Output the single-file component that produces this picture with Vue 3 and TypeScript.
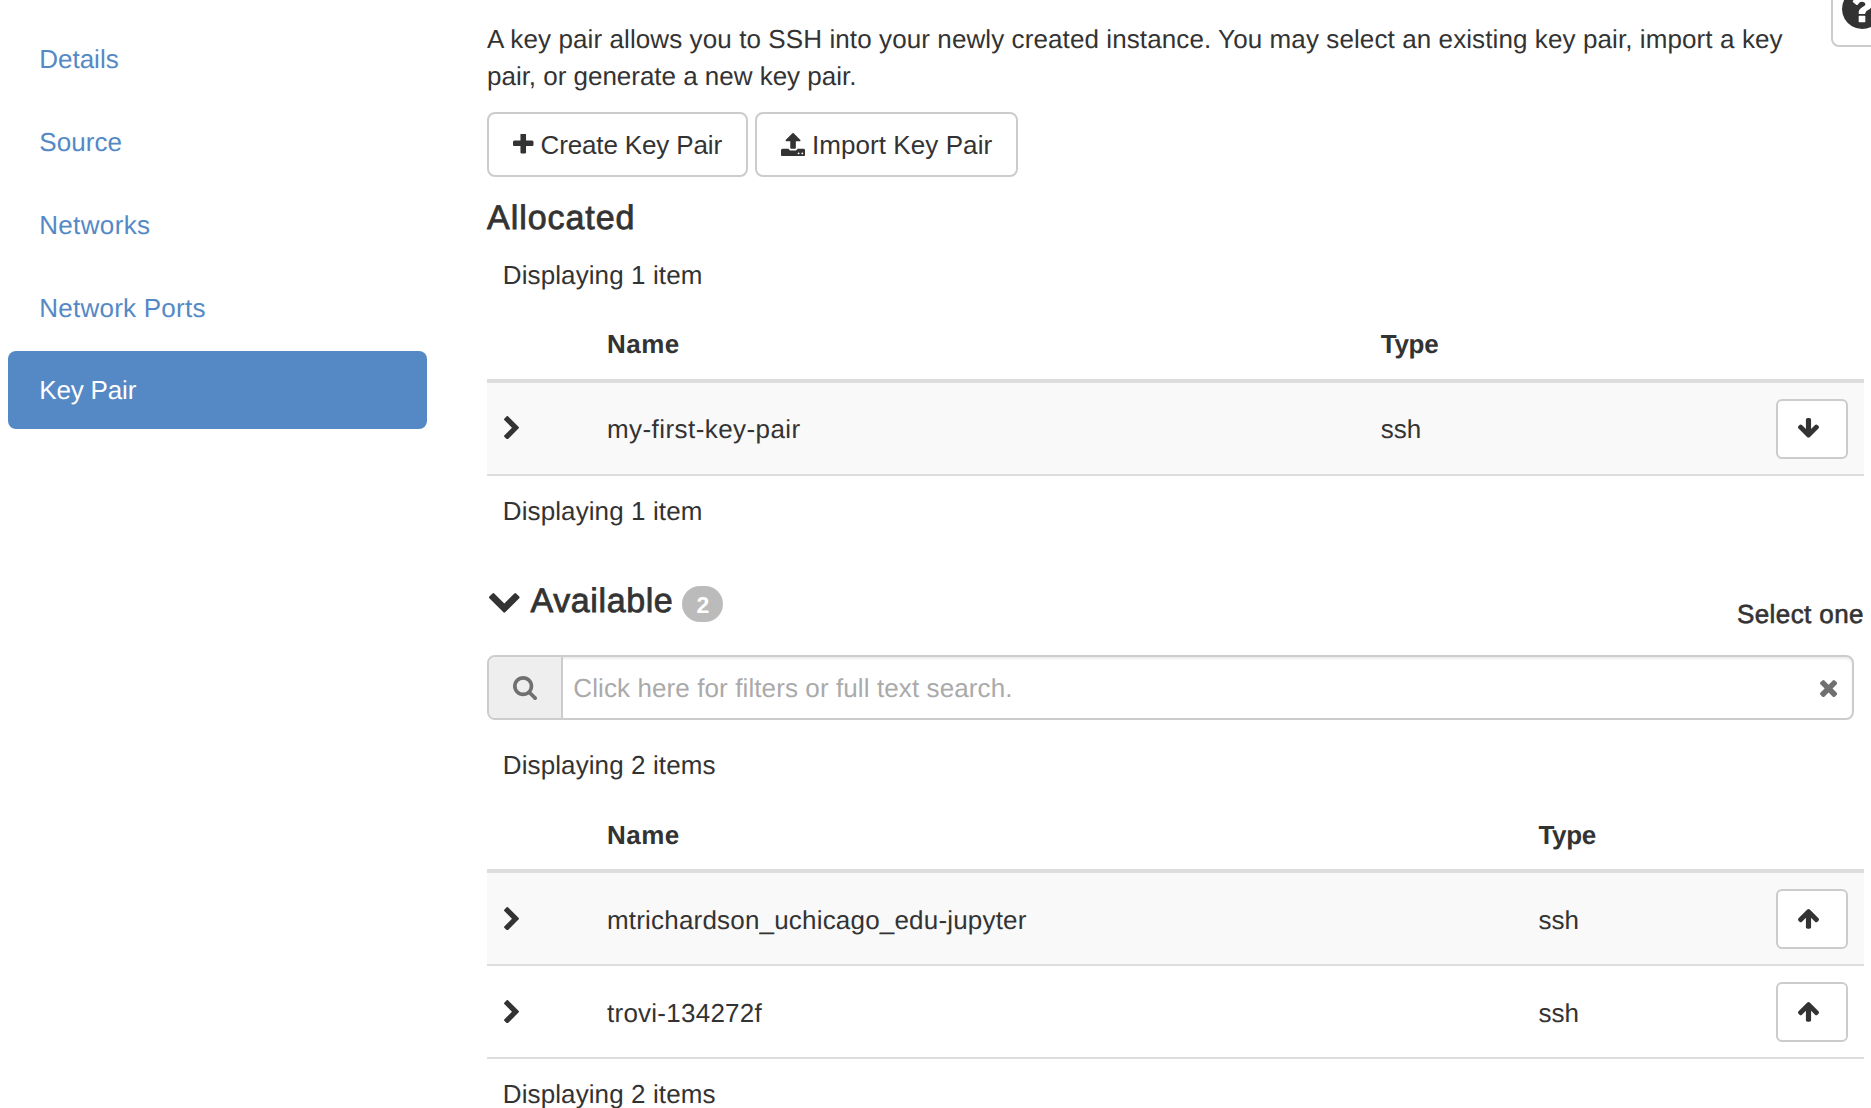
<script setup lang="ts">
interface Step { label: string; spacing: string; active?: boolean }
interface KeyPair { name: string; type: string; spacing: string }

const steps: Step[] = [
  { label: 'Details', spacing: '0px' },
  { label: 'Source', spacing: '0.1px' },
  { label: 'Networks', spacing: '0.35px' },
  { label: 'Network Ports', spacing: '0.25px' },
  { label: 'Key Pair', spacing: '-0.15px', active: true },
]
const allocated: KeyPair[] = [{ name: 'my-first-key-pair', type: 'ssh', spacing: '0.43px' }]
const available: KeyPair[] = [
  { name: 'mtrichardson_uchicago_edu-jupyter', type: 'ssh', spacing: '0.19px' },
  { name: 'trovi-134272f', type: 'ssh', spacing: '0.25px' },
]

const chevronRight = 'M1363 877l-742 742q-19 19-45 19t-45-19l-166-166q-19-19-19-45t19-45l531-531-531-531q-19-19-19-45t19-45l166-166q19-19 45-19t45 19l742 742q19 19 19 45t-19 45z'
const arrowUp = 'M1675 971q0 51-37 90l-75 75q-38 38-91 38-54 0-90-38l-294-293v704q0 52-37.5 84.5t-90.5 32.5h-128q-53 0-90.5-32.5t-37.5-84.5v-704l-294 293q-36 38-90 38t-90-38l-75-75q-38-38-38-90 0-53 38-91l651-651q35-37 90-37 54 0 91 37l651 651q37 39 37 91z'
</script>

<template>
  <div class="wizard">
    <nav class="steps">
      <a v-for="s in steps" :key="s.label" class="step" :class="{ active: s.active }" :style="{ letterSpacing: s.spacing }">{{ s.label }}</a>
    </nav>

    <main class="content">
      <header class="top">
        <p class="intro">A key pair allows you to SSH into your newly created instance. You may select an existing key pair, import a key<br><span class="second">pair, or generate a new key pair.</span></p>
        <button class="help" aria-label="Help">
          <svg viewBox="128 128 1536 1536" width="40" height="40"><path d="M1024 1376v-192q0-14-9-23t-23-9h-192q-14 0-23 9t-9 23v192q0 14 9 23t23 9h192q14 0 23-9t9-23zm256-672q0-88-55.5-163t-138.5-116-170-41q-243 0-371 213-15 24 8 42l132 100q7 6 19 6 16 0 25-12 53-68 86-92 34-24 86-24 48 0 85.5 26t37.5 59q0 38-20 61t-68 45q-63 28-115.5 86.5t-52.5 125.5v36q0 14 9 23t23 9h192q14 0 23-9t9-23q0-19 21.5-49.5t54.5-49.5q32-18 49-28.5t46-35 44.5-48 28-60.5 12.5-81zm384 192q0 209-103 385.5t-279.5 279.5-385.5 103-385.5-103-279.5-279.5-103-385.5 103-385.5 279.5-279.5 385.5-103 385.5 103 279.5 279.5 103 385.5z" /></svg>
        </button>
      </header>

      <div class="actions">
        <button class="btn create">
          <svg viewBox="192 192 1408 1408" width="20.5" height="20.5"><path d="M1600 736v192q0 40-28 68t-68 28h-416v416q0 40-28 68t-68 28h-192q-40 0-68-28t-28-68v-416h-416q-40 0-68-28t-28-68v-192q0-40 28-68t68-28h416v-416q0-40 28-68t68-28h192q40 0 68 28t28 68v416h416q40 0 68 28t28 68z" /></svg>
          <span>Create Key Pair</span>
        </button>
        <button class="btn import">
          <svg viewBox="64 64 1664 1600" width="24.1" height="23.2"><path d="M1344 1472q0-26-19-45t-45-19-45 19-19 45 19 45 45 19 45-19 19-45zm256 0q0-26-19-45t-45-19-45 19-19 45 19 45 45 19 45-19 19-45zm128-224v320q0 40-28 68t-68 28h-1472q-40 0-68-28t-28-68v-320q0-40 28-68t68-28h427q21 56 70.5 92t110.5 36h256q61 0 110.5-36t70.5-92h427q40 0 68 28t28 68zm-325-648q-17 40-59 40h-256v448q0 26-19 45t-45 19h-256q-26 0-45-19t-19-45v-448h-256q-42 0-59-40-17-39 14-69l448-448q18-19 45-19t45 19l448 448q31 30 14 69z" /></svg>
          <span>Import Key Pair</span>
        </button>
      </div>

      <section class="allocated">
        <h4 class="title">Allocated</h4>
        <div class="count first">Displaying 1 item</div>
        <div class="table">
          <div class="row head"><span /><span class="name">Name</span><span class="kind">Type</span><span /></div>
          <div v-for="k in allocated" :key="k.name" class="row item">
            <svg class="chev" viewBox="346 26 1036 1612" width="15" height="23.4"><path :d="chevronRight" /></svg>
            <span :style="{ letterSpacing: k.spacing }">{{ k.name }}</span>
            <span class="type">{{ k.type }}</span>
            <button class="move" aria-label="Remove"><svg class="down" viewBox="117 192 1558 1472" width="21" height="19.8"><path :d="arrowUp" /></svg></button>
          </div>
        </div>
        <div class="count last">Displaying 1 item</div>
      </section>

      <section class="available">
        <div class="available-head">
          <svg class="caret" viewBox="90 533 1612 1035" width="30.6" height="19.7"><path d="M1683 808l-742 741q-19 19-45 19t-45-19l-742-741q-19-19-19-45.5t19-45.5l166-165q19-19 45-19t45 19l531 531 531-531q19-19 45-19t45 19l166 165q19 19 19 45.5t-19 45.5z" /></svg>
          <h4 class="title">Available</h4>
          <span class="badge">2</span>
          <span class="hint">Select one</span>
        </div>
        <div class="search">
          <span class="addon"><svg viewBox="64 128 1664 1664" width="24" height="24"><path d="M1216 832q0-185-131.5-316.5t-316.5-131.5-316.5 131.5-131.5 316.5 131.5 316.5 316.5 131.5 316.5-131.5 131.5-316.5zm512 832q0 52-38 90t-90 38q-54 0-90-38l-343-342q-179 124-399 124-143 0-273.5-55.5t-225-150-150-225-55.5-273.5 55.5-273.5 150-225 225-150 273.5-55.5 273.5 55.5 225 150 150 225 55.5 273.5q0 220-124 399l343 343q37 37 37 90z" /></svg></span>
          <span class="field">Click here for filters or full text search.</span>
          <svg class="clear" viewBox="302 366 1188 1188" width="17.2" height="17.2"><path d="M1490 1322q0 40-28 68l-136 136q-28 28-68 28t-68-28l-294-294-294 294q-28 28-68 28t-68-28l-136-136q-28-28-28-68t28-68l294-294-294-294q-28-28-28-68t28-68l136-136q28-28 68-28t68 28l294 294 294-294q28-28 68-28t68 28l136 136q28 28 28 68t-28 68l-294 294 294 294q28 28 28 68z" /></svg>
        </div>
        <div class="count middle">Displaying 2 items</div>
        <div class="table wide">
          <div class="row head"><span /><span class="name">Name</span><span class="kind">Type</span><span /></div>
          <div v-for="k in available" :key="k.name" class="row item">
            <svg class="chev" viewBox="346 26 1036 1612" width="15" height="23.4"><path :d="chevronRight" /></svg>
            <span class="label" :style="{ letterSpacing: k.spacing }">{{ k.name }}</span>
            <span class="type">{{ k.type }}</span>
            <button class="move" aria-label="Allocate"><svg viewBox="117 192 1558 1472" width="21" height="19.8"><path :d="arrowUp" /></svg></button>
          </div>
        </div>
        <div class="count last">Displaying 2 items</div>
      </section>
    </main>
  </div>
</template>

<style>
body { margin: 0; background: #fff; overflow: hidden; }
</style>

<style scoped>
.wizard {
  display: flex;
  width: 1871px;
  height: 1108px;
  overflow: hidden;
  box-sizing: border-box;
  font: 26px/38px "Liberation Sans", Arial, sans-serif;
  color: #333;
  background: #fff;
  text-rendering: geometricPrecision;
}
.wizard *, .wizard *::before { box-sizing: border-box; }
svg { display: block; flex: none; fill: currentColor; }
button { font: inherit; color: inherit; background: #fff; border: 2px solid #ccc; margin: 0; padding: 0; }

.steps { flex: none; width: 487px; padding: 20px 0 0 8px; display: flex; flex-direction: column; }
.step { width: 419px; height: 78px; margin-bottom: 5px; padding: 20px 0 0 31.2px; border-radius: 8px; color: #5489c5; white-space: nowrap; }
.step.active { margin-top: -1px; background: #5489c5; color: #fff; padding-top: 19.5px; }

.content { flex: none; width: 1377px; }
.top { display: flex; height: 112px; }
.intro { margin: 21px 0 0; width: 1344px; flex: none; line-height: 37.3px; letter-spacing: 0.097px; white-space: nowrap; }
.second { letter-spacing: -0.02px; }
.help { flex: none; width: 64px; height: 78px; margin-top: -31px; border-radius: 8px; display: flex; align-items: center; justify-content: flex-start; padding: 1px 0 0 9.2px; }
.actions { display: flex; gap: 7px; }
.btn { display: flex; align-items: center; height: 65px; border-radius: 8px; white-space: nowrap; }
.create { width: 261px; padding-left: 24px; letter-spacing: -0.14px; }
.create svg { margin: -1px 7px 0 0; }
.import { width: 263px; padding-left: 24px; letter-spacing: 0.08px; }
.import svg { margin: 0 6.8px 0 0; }
.title { margin: 0; font-size: 34px; line-height: 38px; font-weight: 400; letter-spacing: 0.95px; -webkit-text-stroke: 0.8px currentColor; white-space: nowrap; }
.allocated { padding-top: 22px; }
.count { height: 38px; padding-left: 15.8px; letter-spacing: 0.1px; }
.first { margin-top: 19px; }
.last { margin-top: 16px; }
.middle { margin-top: 26px; }

.row { display: grid; grid-template-columns: 120px 773.8px 1fr 72px; padding-right: 16px; }
.wide .row { grid-template-columns: 120px 931.4px 1fr 72px; }
.head { height: 85px; padding-top: 31px; font-weight: 700; }
.wide .head { padding-top: 32px; }
.head .name { letter-spacing: 0.45px; }
.head .kind { letter-spacing: -0.3px; }
.item { height: 93px; align-items: center; border-bottom: 2px solid #ddd; }
.head + .item { height: 97px; border-top: 4px solid #ddd; background: #f9f9f9; }
.chev { margin: -2px 0 0 17px; }
.wide .chev { margin-top: 0; }
.type { letter-spacing: 0; }
.wide .label, .wide .type { padding-top: 2px; }
.move { width: 72px; height: 60px; border-radius: 6px; padding: 0 0 1px 20px; display: flex; align-items: center; }
.wide .move { padding-bottom: 0; padding-top: 1px; }
.down { transform: rotate(180deg); }

.available { padding-top: 51px; }
.available-head { display: flex; height: 74px; align-items: flex-start; }
.caret { margin: 12px 11px 0 2px; }
.available-head .title { letter-spacing: 0.6px; margin-top: 1px; }
.badge { width: 41px; height: 36px; margin: 5px 0 0 9px; border-radius: 18px; background: #bbb; color: #fff; font-size: 23px; line-height: 38px; font-weight: 700; text-align: center; }
.hint { margin: 14px 0 0 auto; letter-spacing: 0.42px; -webkit-text-stroke: 0.6px currentColor; }
.search { display: flex; align-items: center; width: 1367px; height: 65px; border: 2px solid #ccc; border-radius: 8px; overflow: hidden; box-shadow: inset 0 2px 2px rgba(0, 0, 0, .075); color: #707070; }
.addon { display: flex; align-items: center; width: 74px; height: 61px; padding-left: 24px; border-right: 2px solid #ccc; background: #eee; }
.field { flex: 1; padding-left: 10.3px; color: #aaa; letter-spacing: 0.1px; }
.clear { margin-right: 15px; margin-top: 2px; }
</style>
